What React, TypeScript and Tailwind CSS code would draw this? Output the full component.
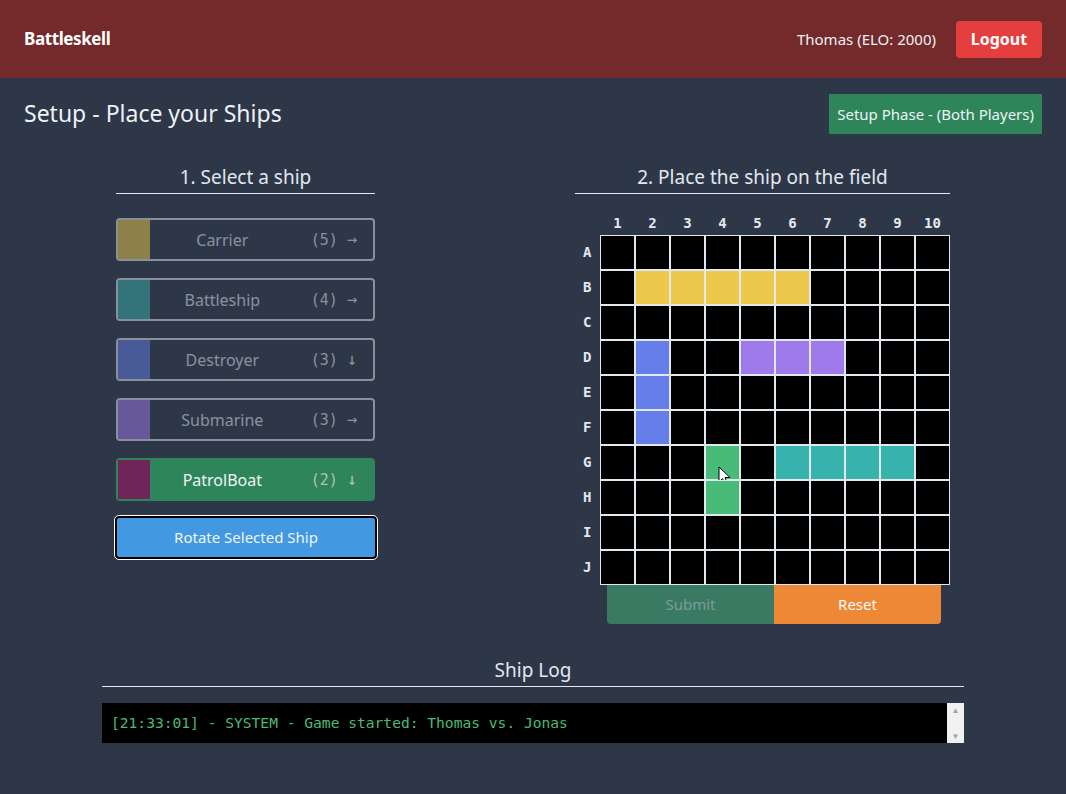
const ships = [
  { name: "Carrier", size: 5, dir: "→", swatch: "bg-[#ecc94b]", selected: false },
  { name: "Battleship", size: 4, dir: "→", swatch: "bg-[#38b2ac]", selected: false },
  { name: "Destroyer", size: 3, dir: "↓", swatch: "bg-[#667eea]", selected: false },
  { name: "Submarine", size: 3, dir: "→", swatch: "bg-[#9f7aea]", selected: false },
  { name: "PatrolBoat", size: 2, dir: "↓", swatch: "bg-[#702459]", selected: true },
];

const rows = ["A", "B", "C", "D", "E", "F", "G", "H", "I", "J"];
const cols = [1, 2, 3, 4, 5, 6, 7, 8, 9, 10];

// placed ships on the board: "row-col" -> colour class
const placed: Record<string, string> = {};
[2, 3, 4, 5, 6].forEach((c) => (placed[`B-${c}`] = "bg-[#ecc94b]"));
["D", "E", "F"].forEach((r) => (placed[`${r}-2`] = "bg-[#667eea]"));
[5, 6, 7].forEach((c) => (placed[`D-${c}`] = "bg-[#9f7aea]"));
["G", "H"].forEach((r) => (placed[`${r}-4`] = "bg-[#48bb78]"));
[6, 7, 8, 9].forEach((c) => (placed[`G-${c}`] = "bg-[#38b2ac]"));

const mono = "font-['DejaVu_Sans_Mono',monospace]";

const ShipButton = ({ ship }: { ship: (typeof ships)[number] }) => {
  if (ship.selected) {
    return (
      <button className="flex h-[43px] w-full items-stretch rounded-sm border-2 border-[#2f855a] bg-[#2f855a] text-left">
        <span className={`w-[32px] ${ship.swatch}`} />
        <span className="flex flex-1 items-center">
          <span className="flex-1 text-center text-[16px] text-[#f0f4f8]">{ship.name}</span>
          <span className={`${mono} px-[16px] text-[15px] text-[#a8c4b8]`}>
            ({ship.size}) <span className="text-[17px]">{ship.dir}</span>
          </span>
        </span>
      </button>
    );
  }
  return (
    <button className="flex h-[43px] w-full items-stretch rounded-sm border-2 border-[#e2e8f0] text-left opacity-50">
      <span className={`w-[32px] ${ship.swatch}`} />
      <span className="flex flex-1 items-center">
        <span className="flex-1 text-center text-[16px] text-[#e2e8f0]">{ship.name}</span>
        <span className={`${mono} px-[16px] text-[15px] text-[#e2e8f0]`}>
          ({ship.size}) <span className="text-[17px]">{ship.dir}</span>
        </span>
      </span>
    </button>
  );
};

const Cursor = () => (
  <svg
    className="pointer-events-none absolute left-[12px] top-[20px]"
    width="14"
    height="21"
    viewBox="0 0 14 21"
  >
    <path
      d="M1 1 L1 16 L4.5 12.5 L7 19 L9.5 18 L7 11.5 L12 11.5 Z"
      fill="#fff"
      stroke="#000"
      strokeWidth="1"
      strokeLinejoin="round"
    />
  </svg>
);

const App = () => {
  return (
    <main className="min-h-[794px] bg-[#2d3748] font-['Noto_Sans',sans-serif] text-[#e2e8f0]">
      {/* Header */}
      <header className="flex h-[78px] items-center justify-between bg-[#742a2a] px-6">
        <h1 className="text-[17px] font-bold tracking-[-0.4px] text-white">Battleskell</h1>
        <div className="flex items-center gap-5">
          <span className="text-[15px] text-[#edf2f7]">Thomas (ELO: 2000)</span>
          <button className="h-[37px] w-[86px] rounded bg-[#e53e3e] text-[16px] font-bold text-white">
            Logout
          </button>
        </div>
      </header>

      {/* Title row */}
      <div className="flex items-start justify-between px-6 pt-4">
        <h2 className="pt-[2px] text-[23px] text-[#edf2f7]">Setup - Place your Ships</h2>
        <div className="flex h-[40px] items-center bg-[#2f855a] px-2 text-[15px] text-[#edf2f7]">
          Setup Phase - (Both Players)
        </div>
      </div>

      {/* Setup area */}
      <div className="mt-[28px] flex pl-[116px]">
        {/* Ship selection */}
        <section className="w-[259px]">
          <h3 className="border-b border-[#e2e8f0] pb-[1px] text-center text-[19px] leading-[30px]">
            1. Select a ship
          </h3>
          <div className="mt-[24px] flex flex-col gap-[17px]">
            {ships.map((s) => (
              <ShipButton key={s.name} ship={s} />
            ))}
          </div>
          <button className="mt-[15px] ml-[-1px] h-[43px] w-[262px] rounded border-2 border-black bg-[#4299e1] text-[15px] text-[#f0f4f8] outline outline-1 outline-white">
            Rotate Selected Ship
          </button>
        </section>

        {/* Board */}
        <section className="ml-[200px] w-[375px]">
          <h3 className="border-b border-[#e2e8f0] pb-[1px] text-center text-[19px] leading-[30px]">
            2. Place the ship on the field
          </h3>
          <div className={`${mono} mt-[17px] flex pl-[25px] text-[14px] font-bold text-[#e2e8f0]`}>
            {cols.map((c) => (
              <span key={c} className="w-[35px] text-center leading-[24px]">
                {c}
              </span>
            ))}
          </div>
          <div className="flex">
            <div className={`${mono} flex w-[25px] flex-col text-[14px] font-bold`}>
              {rows.map((r) => (
                <span key={r} className="flex h-[35px] items-center pl-[8px]">
                  {r}
                </span>
              ))}
            </div>
            <div className="grid w-[350px] grid-cols-10">
              {rows.map((r) =>
                cols.map((c) => (
                  <div
                    key={`${r}-${c}`}
                    className={`relative h-[35px] border border-[#e2e8f0] ${placed[`${r}-${c}`] ?? "bg-black"}`}
                  >
                    {r === "G" && c === 4 && <Cursor />}
                  </div>
                ))
              )}
            </div>
          </div>
          <div className="ml-[32px] flex w-[334px]">
            <button className="h-[39px] flex-1 rounded-bl-sm bg-[#3b7a62] text-[15px] text-[#7f9a98]">
              Submit
            </button>
            <button className="h-[39px] flex-1 rounded-br-sm bg-[#ed8936] text-[15px] text-[#f7fafc]">
              Reset
            </button>
          </div>
        </section>
      </div>

      {/* Ship log */}
      <section className="mx-[102px] mt-[31px]">
        <h3 className="border-b border-[#e2e8f0] pb-[1px] text-center text-[19px] leading-[30px]">
          Ship Log
        </h3>
        <div className="mt-[16px] flex h-[40px] bg-black">
          <p className={`${mono} flex-1 pl-[9px] pt-[10px] text-[14.6px] leading-[20px] text-[#48bb78]`}>
            [21:33:01] - SYSTEM - Game started: Thomas vs. Jonas
          </p>
          <div className="flex w-[17px] flex-col items-center justify-between bg-[#f1f1f1] py-[3px] text-[8px] leading-none text-[#a3a3a3]">
            <span>▲</span>
            <span>▼</span>
          </div>
        </div>
      </section>
    </main>
  );
};

export default App;
